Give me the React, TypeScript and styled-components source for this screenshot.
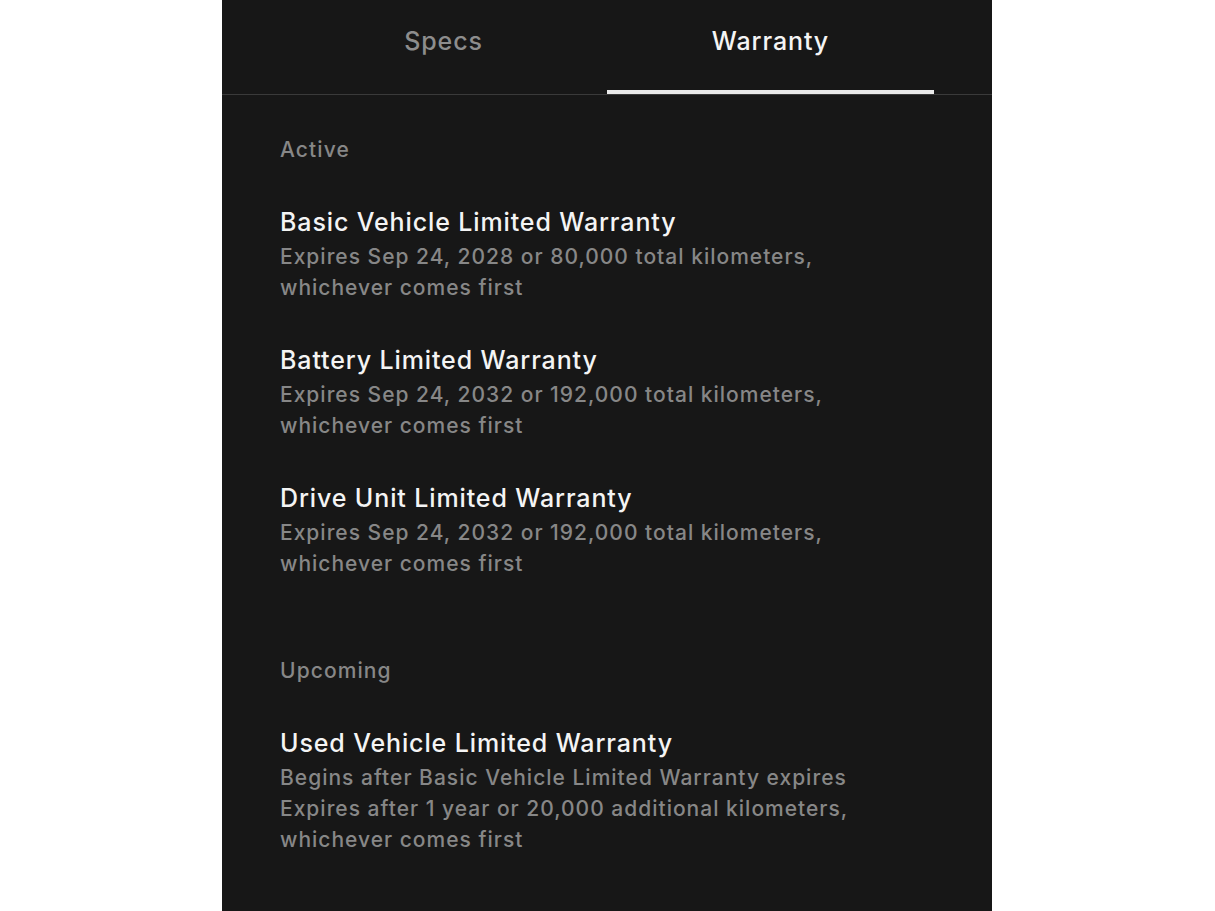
import React from "react";
import styled, { createGlobalStyle } from "styled-components";

const GlobalStyle = createGlobalStyle`
  html, body {
    margin: 0;
    padding: 0;
    background: #ffffff;
  }
  body {
    font-family: Inter, "Noto Sans", "Liberation Sans", sans-serif;
    -webkit-font-smoothing: antialiased;
  }
`;

const Page = styled.div`
  display: flex;
  min-height: 100vh;
  padding-left: 222px;
  background: #ffffff;
`;

const Panel = styled.div`
  width: 770px;
  min-height: 100vh;
  background: #171717;
  display: flex;
  flex-direction: column;
`;

const TabBar = styled.nav`
  display: flex;
  padding: 0 58px;
  border-bottom: 1px solid #3a3a3a;
`;

const Tab = styled.button<{ $active?: boolean }>`
  flex: 1;
  box-sizing: border-box;
  height: 94px;
  padding: 24px 0 32px;
  margin: 0;
  border: none;
  border-bottom: 4px solid ${(p) => (p.$active ? "#e9e9e9" : "transparent")};
  background: transparent;
  font-family: inherit;
  font-size: 25px;
  line-height: 34px;
  font-weight: 500;
  letter-spacing: 0.9px;
  color: ${(p) => (p.$active ? "#f4f4f4" : "#8d8d8d")};
  text-align: center;
  cursor: pointer;
`;

const Content = styled.main`
  display: flex;
  flex-direction: column;
  gap: 77px;
  padding: 40px 58px;
`;

const Section = styled.section`
  display: flex;
  flex-direction: column;
  gap: 40px;
`;

const SectionLabel = styled.h3`
  margin: 0;
  font-size: 21px;
  line-height: 30px;
  font-weight: 500;
  letter-spacing: 1.1px;
  color: #878787;
`;

const Item = styled.div`
  display: flex;
  flex-direction: column;
`;

const ItemTitle = styled.div`
  font-size: 25px;
  line-height: 34px;
  font-weight: 500;
  letter-spacing: 0.88px;
  color: #f4f4f4;
  margin-bottom: 2px;
`;

const ItemLine = styled.div`
  font-size: 21px;
  line-height: 31px;
  font-weight: 500;
  letter-spacing: 1px;
  color: #878787;
`;

type Warranty = { title: string; lines: string[] };

const sections: { label: string; items: Warranty[] }[] = [
  {
    label: "Active",
    items: [
      {
        title: "Basic Vehicle Limited Warranty",
        lines: [
          "Expires Sep 24, 2028 or 80,000 total kilometers,",
          "whichever comes first",
        ],
      },
      {
        title: "Battery Limited Warranty",
        lines: [
          "Expires Sep 24, 2032 or 192,000 total kilometers,",
          "whichever comes first",
        ],
      },
      {
        title: "Drive Unit Limited Warranty",
        lines: [
          "Expires Sep 24, 2032 or 192,000 total kilometers,",
          "whichever comes first",
        ],
      },
    ],
  },
  {
    label: "Upcoming",
    items: [
      {
        title: "Used Vehicle Limited Warranty",
        lines: [
          "Begins after Basic Vehicle Limited Warranty expires",
          "Expires after 1 year or 20,000 additional kilometers,",
          "whichever comes first",
        ],
      },
    ],
  },
];

export default function App() {
  return (
    <>
      <GlobalStyle />
      <Page>
        <Panel>
          <TabBar>
            <Tab>Specs</Tab>
            <Tab $active>Warranty</Tab>
          </TabBar>
          <Content>
            {sections.map((s) => (
              <Section key={s.label}>
                <SectionLabel>{s.label}</SectionLabel>
                {s.items.map((it) => (
                  <Item key={it.title}>
                    <ItemTitle>{it.title}</ItemTitle>
                    {it.lines.map((l) => (
                      <ItemLine key={l}>{l}</ItemLine>
                    ))}
                  </Item>
                ))}
              </Section>
            ))}
          </Content>
        </Panel>
      </Page>
    </>
  );
}
